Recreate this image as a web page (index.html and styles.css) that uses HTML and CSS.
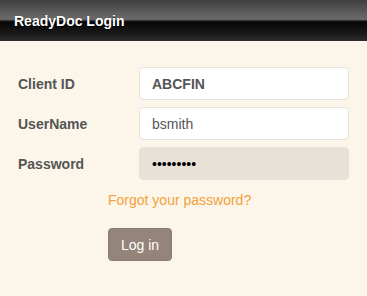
FILE: index.html
```html
<!DOCTYPE html>
<html lang="en">
<head>
    <meta charset="UTF-8">
    <meta name="viewport" content="width=device-width, initial-scale=1.0">
    <title>ReadyDoc Login</title>
    <link rel="stylesheet" href="styles.css">
</head>
<body>
    <div class="header">
        <h1>ReadyDoc Login</h1>
    </div>

    <form class="login-form" id="loginForm">
        <div class="form-grid">
            <label for="clientId">Client ID</label>
            <input type="text" id="clientId" class="bold" value="ABCFIN">

            <label for="username">UserName</label>
            <input type="text" id="username" value="bsmith">

            <label for="password">Password</label>
            <input type="password" id="password" class="filled" value="123456789">
        </div>

        <div class="actions">
            <a href="#" class="forgot">Forgot your password?</a>
            <button type="submit">Log in</button>
        </div>
    </form>
</body>
</html>
```

FILE: styles.css
```css
* {
    margin: 0;
    padding: 0;
    box-sizing: border-box;
}

body {
    font-family: "Liberation Sans", Arial, sans-serif;
    background: #fcf5ea;
    min-height: 100vh;
}

.header {
    height: 41px;
    display: flex;
    align-items: center;
    padding-left: 14px;
    background: linear-gradient(#3e3e3e 0%, #6c6c6c 47%, #060606 53%, #1c1c1c 85%, #2e2e2e 100%);
}

.header h1 {
    color: #fff;
    font-size: 14px;
    font-weight: 700;
    text-shadow: 0 1px 1px #000;
}

.login-form {
    padding: 26px 18px 0 18px;
}

.form-grid {
    display: grid;
    grid-template-columns: 121px 210px;
    row-gap: 7px;
    align-items: center;
}

label {
    color: #555;
    font-size: 14px;
    font-weight: 700;
}

input {
    height: 33px;
    width: 100%;
    padding: 0 12px;
    border: 1px solid #e6e1dc;
    border-radius: 4px;
    background: #fff;
    color: #555;
    font-family: inherit;
    font-size: 14px;
}

input.bold {
    font-weight: 700;
}

input.filled {
    background: #e7e1d7;
    border-color: #e7e1d7;
    color: #000;
}

.actions {
    padding-left: 90px;
    padding-top: 12px;
    display: flex;
    flex-direction: column;
    align-items: flex-start;
}

.forgot {
    color: #f2a23a;
    font-size: 14px;
    text-decoration: none;
}

button {
    margin-top: 20px;
    width: 64px;
    height: 33px;
    background: #948479;
    color: #fff;
    border: 1px solid #8a7b71;
    border-radius: 4px;
    font-family: inherit;
    font-size: 14px;
    cursor: pointer;
}
```
